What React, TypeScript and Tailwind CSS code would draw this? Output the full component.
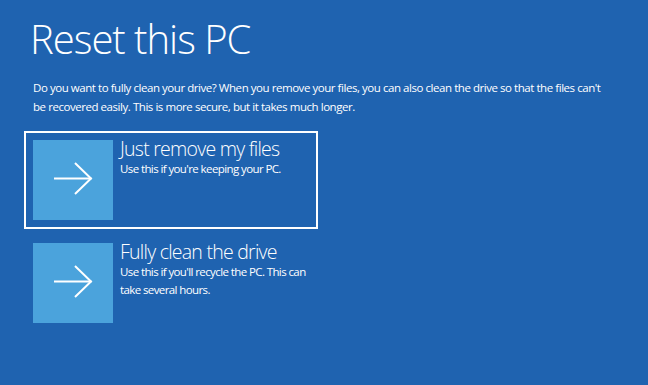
import React from "react";

function Arrow() {
  return (
    <svg width="80" height="80" viewBox="0 0 80 80" fill="none">
      <path d="M21 38.5 H58.5" stroke="white" strokeWidth="2" />
      <path d="M42 23 L58 38.5 L42 54" stroke="white" strokeWidth="2" />
    </svg>
  );
}

function Option({
  title,
  desc,
  selected,
}: {
  title: string;
  desc: string;
  selected?: boolean;
}) {
  return (
    <div
      className={`flex w-[294px] h-[98px] p-[7px] border-2 gap-[7px] ${
        selected ? "border-white" : "border-transparent"
      }`}
    >
      <div className="w-[80px] h-[80px] shrink-0 bg-[#4ba3dc] flex items-center justify-center">
        <Arrow />
      </div>
      <div className="flex flex-col">
        <div className="text-[19.5px] leading-[23px] font-light tracking-[-0.75px] mt-[-3px] text-white">{title}</div>
        <div className="text-[11.5px] leading-[18px] tracking-[-0.6px] text-white">{desc}</div>
      </div>
    </div>
  );
}

export default function App() {
  return (
    <div
      className="w-[648px] h-[385px] bg-[#1f63b0] text-white overflow-hidden"
      style={{ fontFamily: '"Open Sans", "Noto Sans", sans-serif' }}
    >
      <div className="pl-[30px] pt-[12px] text-[40px] leading-[54px] font-light tracking-[-1px]">Reset this PC</div>
      <div className="pl-[33px] pr-[40px] mt-[12px] text-[11.5px] leading-[19px] tracking-[-0.45px]">
        Do you want to fully clean your drive? When you remove your files, you can also clean the drive so that the files can't be recovered easily. This is more secure, but it takes much longer.
      </div>
      <div className="pl-[24px] mt-[15px] flex flex-col gap-[5px]">
        <Option title="Just remove my files" desc="Use this if you're keeping your PC." selected />
        <Option title="Fully clean the drive" desc="Use this if you'll recycle the PC. This can take several hours." />
      </div>
    </div>
  );
}
